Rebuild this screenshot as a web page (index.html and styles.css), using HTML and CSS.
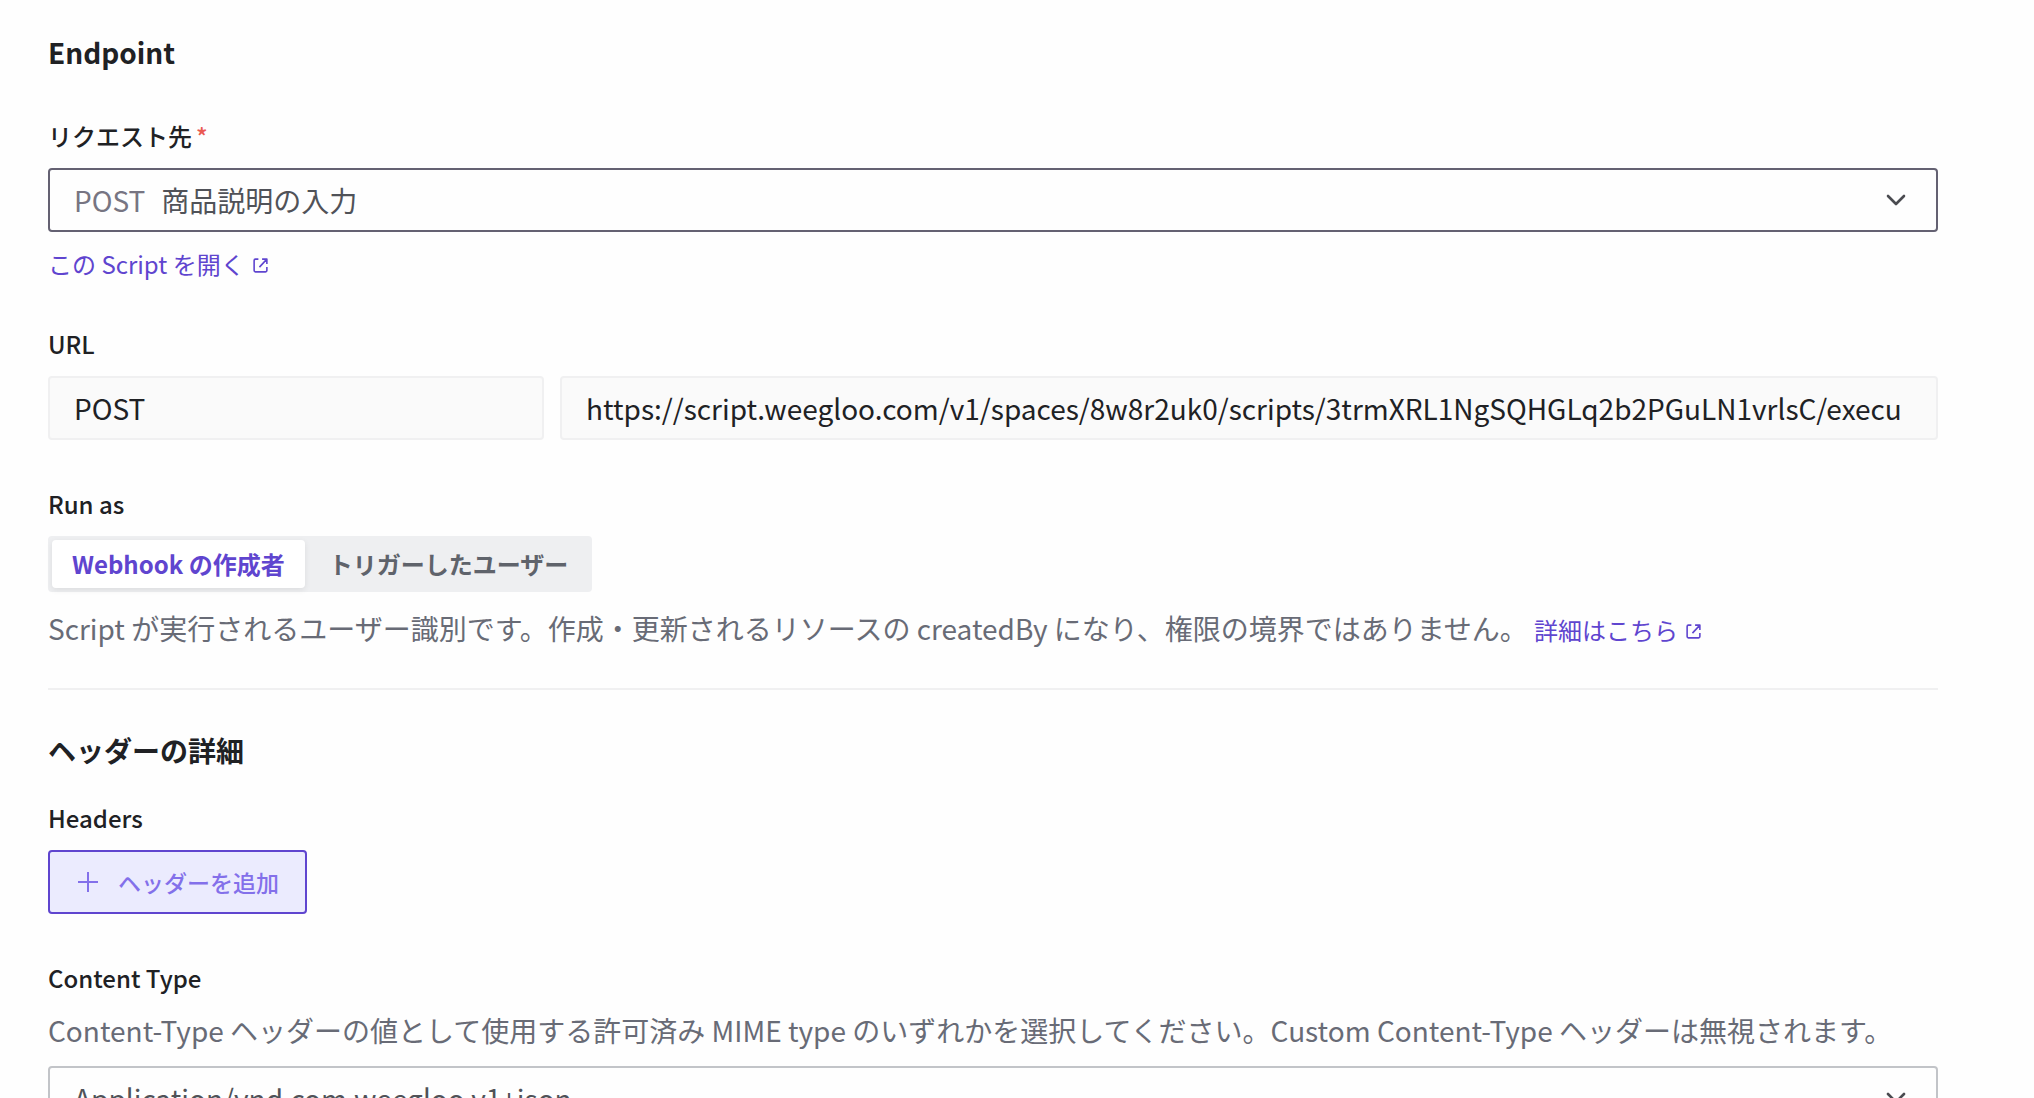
FILE: index.html
```html
<!DOCTYPE html>
<html lang="ja">
<head>
<meta charset="utf-8">
<meta name="viewport" content="width=device-width, initial-scale=1">
<title>Webhook</title>
<link rel="stylesheet" href="styles.css">
</head>
<body>
<form class="page">
  <section class="section">
    <h2 class="section-title section-title-spaced">Endpoint</h2>
    <div class="field">
      <label class="label" for="target">リクエスト先<span class="required">*</span></label>
      <div class="select-box select-box-strong">
        <span class="method">POST</span>
        <select class="select" id="target"><option>商品説明の入力</option></select>
        <svg class="chevron" viewBox="0 0 24 24" aria-hidden="true"><path d="M4 8l8 8 8-8"/></svg>
      </div>
      <a class="link" href="#script">この Script を開く<svg class="external" viewBox="0 0 16 16" aria-hidden="true"><path d="M6 2H3.200Q2 2 2 3.200V12.800Q2 14 3.200 14H12.800Q14 14 14 12.800V9.500M9.500 2H14V6.500M14 2L7 9.500"/></svg></a>
    </div>
    <div class="field">
      <label class="label" for="url">URL</label>
      <div class="url-row">
        <input class="input" type="text" value="POST" aria-label="Method" readonly>
        <input class="input" id="url" type="text" value="https://script.weegloo.com/v1/spaces/8w8r2uk0/scripts/3trmXRL1NgSQHGLq2b2PGuLN1vrlsC/execu" readonly>
      </div>
    </div>
    <div class="field" role="radiogroup" aria-labelledby="run-as">
      <span class="label" id="run-as">Run as</span>
      <div class="segments">
        <label class="segment"><input class="segment-input" type="radio" name="run-as" checked>Webhook の作成者</label>
        <label class="segment"><input class="segment-input" type="radio" name="run-as">トリガーしたユーザー</label>
      </div>
      <p class="help">Script が実行されるユーザー識別です。作成・更新されるリソースの createdBy になり、権限の境界ではありません。 <a class="link" href="#details">詳細はこちら<svg class="external" viewBox="0 0 16 16" aria-hidden="true"><path d="M6 2H3.200Q2 2 2 3.200V12.800Q2 14 3.200 14H12.800Q14 14 14 12.800V9.500M9.500 2H14V6.500M14 2L7 9.500"/></svg></a></p>
    </div>
  </section>
  <section class="section section-divided">
    <h2 class="section-title">ヘッダーの詳細</h2>
    <div class="field">
      <span class="label">Headers</span>
      <button class="add-button" type="button"><svg class="plus" viewBox="0 0 24 24" aria-hidden="true"><path d="M12 2v20M2 12h20"/></svg>ヘッダーを追加</button>
    </div>
    <div class="field">
      <label class="label" for="content-type">Content Type</label>
      <p class="help">Content-Type ヘッダーの値として使用する許可済み MIME type のいずれかを選択してください。Custom Content-Type ヘッダーは無視されます。</p>
      <div class="select-box">
        <select class="select" id="content-type"><option>Application/vnd.com.weegloo.v1+json</option></select>
        <svg class="chevron" viewBox="0 0 24 24" aria-hidden="true"><path d="M4 8l8 8 8-8"/></svg>
      </div>
    </div>
  </section>
</form>
</body>
</html>
```
FILE: styles.css
```css
* {
  box-sizing: border-box;
}

body {
  margin: 0;
  height: 100vh;
  overflow: hidden;
  background: #fefefe;
  color: #202124;
  font-family: "Noto Sans CJK JP", sans-serif;
  font-size: 28px;
  line-height: 40px;
}

input,
select,
button {
  font: inherit;
  color: inherit;
}

.page {
  padding: 32px 96px 32px 48px;
}

.section {
  display: flex;
  flex-direction: column;
  gap: 48px;
}

.section-divided {
  margin-top: 40px;
  padding-top: 40px;
  border-top: 2px solid #f0f0f1;
}

.section-title {
  margin: 0 0 -16px;
  font-size: 28px;
  font-weight: 700;
}

.section-title-spaced {
  margin-bottom: 0;
}

.field {
  display: flex;
  flex-direction: column;
  align-items: flex-start;
  gap: 16px;
}

.label {
  font-size: 24px;
  font-weight: 500;
  line-height: 32px;
}

.required {
  margin-left: 4px;
  color: #ea5a52;
}

.select-box {
  display: flex;
  align-items: center;
  width: 100%;
  height: 64px;
  padding: 0 28px 0 24px;
  border: 2px solid #c2c4c8;
  border-radius: 4px;
  color: #505258;
}

.select-box-strong {
  border-color: #646172;
}

.method {
  margin-right: 16px;
  color: #777582;
}

.select {
  flex: 1;
  min-width: 0;
  height: 60px;
  padding: 0;
  border: 0;
  background: none;
  appearance: none;
  outline: none;
}

.chevron {
  width: 24px;
  height: 24px;
  fill: none;
  stroke: #4a4b50;
  stroke-width: 2.600;
  stroke-linecap: round;
  stroke-linejoin: round;
}

.link {
  color: #5f45cf;
  font-size: 24px;
  line-height: 32px;
  text-decoration: none;
}

.external {
  width: 17px;
  height: 17px;
  margin-left: 7px;
  fill: none;
  stroke: currentColor;
  stroke-width: 1.500;
  stroke-linejoin: round;
}

.url-row {
  display: grid;
  grid-template-columns: 9fr 25fr;
  gap: 16px;
  width: 100%;
}

.input {
  min-width: 0;
  height: 64px;
  padding: 0 24px;
  border: 2px solid #f0f0f1;
  border-radius: 4px;
  background: #fafafa;
  outline: none;
}

.segments {
  display: flex;
  gap: 4px;
  padding: 4px;
  border-radius: 4px;
  background: #eeeff1;
}

.segment {
  padding: 8px 20px;
  border-radius: 4px;
  color: #5f636b;
  font-size: 24px;
  font-weight: 700;
  line-height: 32px;
  cursor: pointer;
}

.segment:has(:checked) {
  background: #fff;
  box-shadow: 0 2px 6px rgba(0, 0, 0, 0.08);
  color: #5f45cf;
}

.segment-input {
  position: absolute;
  opacity: 0;
  pointer-events: none;
}

.help {
  margin: 0;
  color: #686b76;
}

.add-button {
  display: flex;
  align-items: center;
  gap: 18px;
  height: 64px;
  padding: 0 26px;
  border: 2px solid #5f45cf;
  border-radius: 4px;
  background: #ebebfe;
  color: #8370ea;
  font-size: 23px;
  font-weight: 500;
}

.plus {
  width: 24px;
  height: 24px;
  fill: none;
  stroke: currentColor;
  stroke-width: 2;
}
```
